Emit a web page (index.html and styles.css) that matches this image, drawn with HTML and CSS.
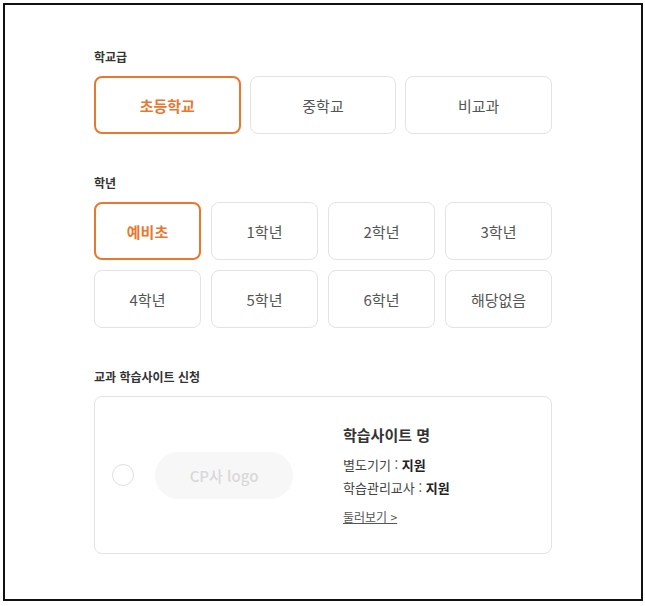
FILE: index.html
```html
<!DOCTYPE html>
<html lang="ko">
<head>
<meta charset="utf-8">
<link rel="stylesheet" href="styles.css">
</head>
<body>
<div class="frame">
  <div class="content">
    <section class="group">
      <h3 class="label">학교급</h3>
      <div class="row3">
        <button class="opt selected">초등학교</button>
        <button class="opt">중학교</button>
        <button class="opt">비교과</button>
      </div>
    </section>
    <section class="group">
      <h3 class="label">학년</h3>
      <div class="grid4">
        <button class="opt selected">예비초</button>
        <button class="opt">1학년</button>
        <button class="opt">2학년</button>
        <button class="opt">3학년</button>
        <button class="opt">4학년</button>
        <button class="opt">5학년</button>
        <button class="opt">6학년</button>
        <button class="opt">해당없음</button>
      </div>
    </section>
    <section class="group">
      <h3 class="label">교과 학습사이트 신청</h3>
      <div class="card">
        <span class="radio"></span>
        <div class="logo">CP사 logo</div>
        <div class="info">
          <div class="title">학습사이트 명</div>
          <div class="line">별도기기 : <b>지원</b></div>
          <div class="line">학습관리교사 : <b>지원</b></div>
          <a class="more">둘러보기 &gt;</a>
        </div>
      </div>
    </section>
  </div>
</div>
</body>
</html>
```

FILE: styles.css
```css
* { box-sizing: border-box; }
html, body { margin: 0; padding: 0; background: #fff; }
body {
  font-family: "Noto Sans CJK KR", "Noto Sans", sans-serif;
  color: #333;
}
.frame {
  margin: 3px;
  width: 640px;
  height: 598px;
  border: 2px solid #111;
  padding: 43px 0 0 89px;
}
.content {
  width: 458px;
  display: flex;
  flex-direction: column;
  gap: 40px;
}
.label {
  margin: 0 0 10px;
  font-size: 12px;
  line-height: 18px;
  font-weight: 700;
  color: #333;
}
.row3 {
  display: grid;
  grid-template-columns: repeat(3, 1fr);
  gap: 9px;
}
.grid4 {
  display: grid;
  grid-template-columns: repeat(4, 1fr);
  column-gap: 10px;
  row-gap: 10px;
}
.opt {
  height: 58px;
  border: 1px solid #e3e3e3;
  border-radius: 8px;
  background: #fff;
  font-family: inherit;
  font-size: 15px;
  color: #555;
  padding: 0;
}
.opt.selected {
  border: 2px solid #e8782f;
  color: #e8782f;
  font-weight: 700;
}
.card {
  height: 158px;
  border: 1px solid #e3e3e3;
  border-radius: 8px;
  display: flex;
  align-items: center;
  padding-left: 17px;
}
.radio {
  width: 22px;
  height: 22px;
  border: 1.5px solid #e0e0e0;
  border-radius: 50%;
  flex: none;
}
.logo {
  margin-left: 21px;
  width: 138px;
  height: 47px;
  border-radius: 24px;
  background: #f7f7f7;
  color: #d9d9d9;
  font-size: 15px;
  font-weight: 500;
  display: flex;
  align-items: center;
  justify-content: center;
  flex: none;
}
.info {
  margin-left: 50px;
  display: flex;
  flex-direction: column;
  color: #444;
}
.title {
  font-size: 15px;
  font-weight: 700;
  color: #333;
  line-height: 22px;
  margin-bottom: 7px;
}
.line {
  font-size: 13px;
  line-height: 23px;
}
.line b { color: #222; }
.more {
  margin-top: 9px;
  font-size: 12px;
  line-height: 18px;
  color: #555;
  text-decoration: underline;
}
```
